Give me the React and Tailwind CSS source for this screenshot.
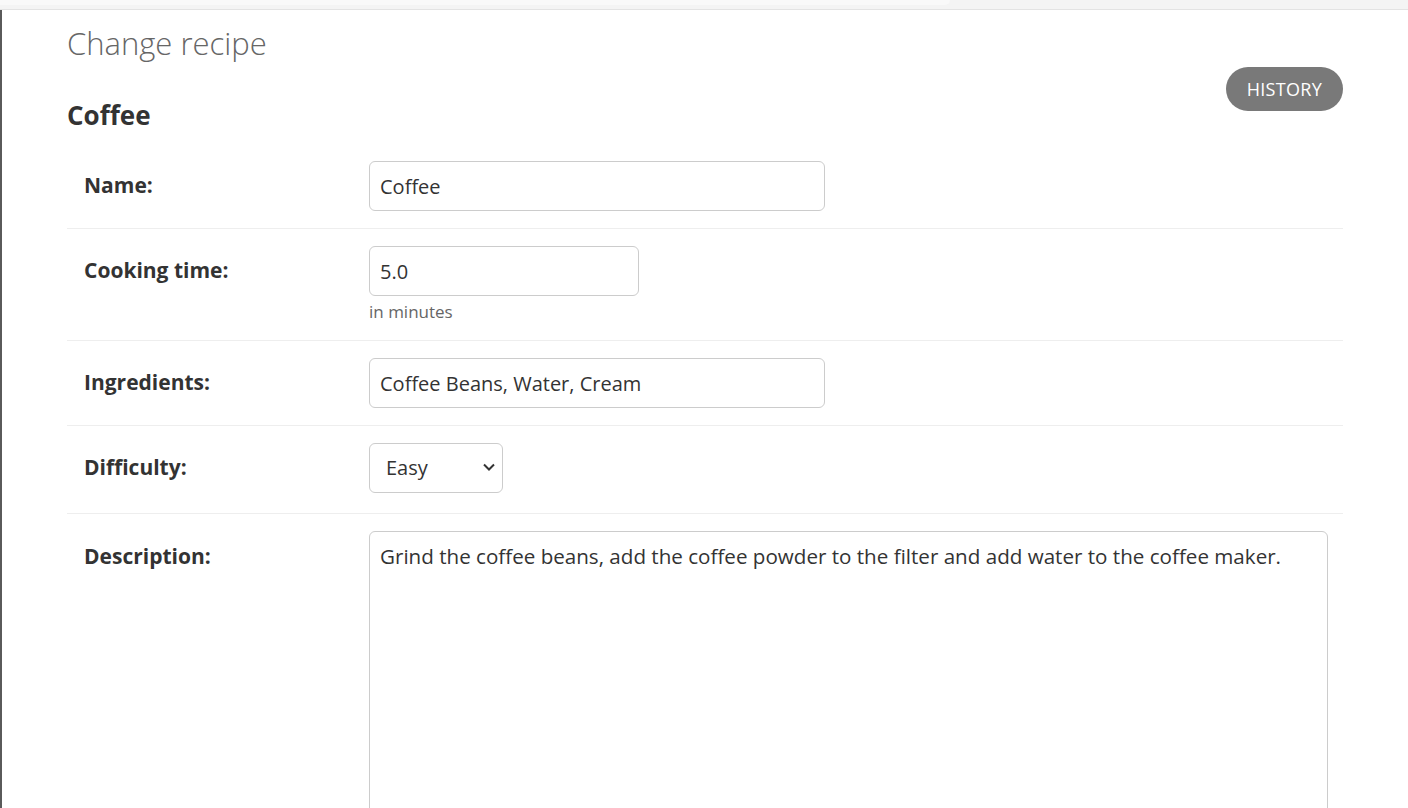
import { useState } from 'react';

const font = { fontFamily: '"Open Sans", "Noto Sans", sans-serif' };

function Row({ label, children, last, extra }) {
  return (
    <div className={`flex px-[17px] pt-[17px] ${extra ? 'pb-[20px]' : 'pb-[17px]'} ${last ? '' : 'border-b border-[#eeeeee]'}`}>
      <label className={`w-[285px] shrink-0 ${last ? 'pt-[12px]' : 'pt-[11px]'} text-[21px] leading-[26px] font-bold text-[#333333]`}>
        {label}
      </label>
      <div className="flex-1">{children}</div>
    </div>
  );
}

export default function App() {
  const [name, setName] = useState('Coffee');
  const [time, setTime] = useState('5.0');
  const [ingredients, setIngredients] = useState('Coffee Beans, Water, Cream');
  const [difficulty, setDifficulty] = useState('Easy');
  const [description, setDescription] = useState(
    'Grind the coffee beans, add the coffee powder to the filter and add water to the coffee maker.'
  );

  const inputCls =
    'h-[50px] rounded-[6px] border border-[#cccccc] bg-white px-[10px] text-[20px] text-[#333333] outline-none';

  return (
    <div className="min-h-screen bg-white" style={font}>
      {/* browser strip */}
      <div className="h-[10px] bg-[#f4f4f4] border-b border-[#e3e3e3] relative overflow-hidden">
        <div className="absolute left-0 top-0 h-[5px] w-[950px] bg-[#f9f9f9] rounded-br-[16px]"></div>
      </div>

      <div className="border-l-2 border-[#5a5a5a] min-h-[798px] pl-[65px] pr-[65px]">
        <h1 className="pt-[11px] text-[31px] leading-[44px] font-light text-[#666666]">Change recipe</h1>

        <div className="flex justify-between items-start">
          <h2 className="mt-[35px] text-[26px] leading-[30px] font-bold text-[#333333]">Coffee</h2>
          <button className="mt-[2px] h-[44px] px-[21px] rounded-full bg-[#797979] text-white text-[18px] tracking-[0.3px] uppercase">
            History
          </button>
        </div>

        <div className="mt-[14px]">
          <Row label="Name:">
            <input className={`${inputCls} w-[456px]`} value={name} onChange={(e) => setName(e.target.value)} />
          </Row>
          <Row label="Cooking time:">
            <input className={`${inputCls} w-[270px]`} value={time} onChange={(e) => setTime(e.target.value)} />
            <p className="mt-[5px] text-[17px] leading-[22px] text-[#666666]">in minutes</p>
          </Row>
          <Row label="Ingredients:">
            <input
              className={`${inputCls} w-[456px]`}
              value={ingredients}
              onChange={(e) => setIngredients(e.target.value)}
            />
          </Row>
          <Row label="Difficulty:" extra>
            <div className="relative w-[134px]">
              <select
                className={`${inputCls} w-[134px] appearance-none pl-[16px] pr-[30px]`}
                value={difficulty}
                onChange={(e) => setDifficulty(e.target.value)}
              >
                <option>Easy</option>
                <option>Medium</option>
                <option>Hard</option>
              </select>
              <svg
                className="absolute right-[7px] top-[19px] pointer-events-none"
                width="14"
                height="10"
                viewBox="0 0 14 10"
                fill="none"
                stroke="#333"
                strokeWidth="2"
              >
                <path d="M2 2.5l5 5 5-5" />
              </svg>
            </div>
          </Row>
          <Row label="Description:" last>
            <textarea
              className="w-[959px] h-[300px] rounded-[6px] border border-[#cccccc] bg-white px-[10px] py-[10px] text-[20.6px] leading-[28px] text-[#333333] outline-none resize-none"
              value={description}
              onChange={(e) => setDescription(e.target.value)}
            />
          </Row>
        </div>
      </div>
    </div>
  );
}
